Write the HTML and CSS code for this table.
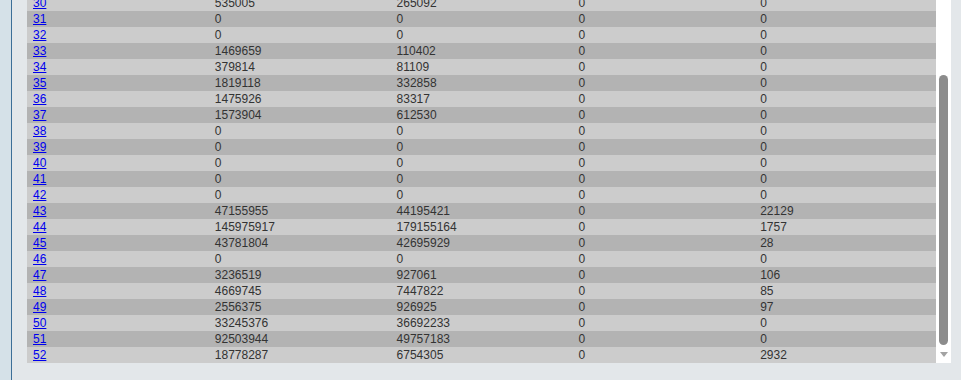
FILE: index.html
```html
<!DOCTYPE html>
<html>
<head>
<meta charset="utf-8">
<link rel="stylesheet" href="styles.css">
</head>
<body>
<div class="side"></div>
<div class="main">
  <div class="table-wrap">
    <table class="data">
      <tbody>
        <tr class="even"><td><a href="#">30</a></td><td>535005</td><td>265092</td><td>0</td><td>0</td></tr>
        <tr class="odd"><td><a href="#">31</a></td><td>0</td><td>0</td><td>0</td><td>0</td></tr>
        <tr class="even"><td><a href="#">32</a></td><td>0</td><td>0</td><td>0</td><td>0</td></tr>
        <tr class="odd"><td><a href="#">33</a></td><td>1469659</td><td>110402</td><td>0</td><td>0</td></tr>
        <tr class="even"><td><a href="#">34</a></td><td>379814</td><td>81109</td><td>0</td><td>0</td></tr>
        <tr class="odd"><td><a href="#">35</a></td><td>1819118</td><td>332858</td><td>0</td><td>0</td></tr>
        <tr class="even"><td><a href="#">36</a></td><td>1475926</td><td>83317</td><td>0</td><td>0</td></tr>
        <tr class="odd"><td><a href="#">37</a></td><td>1573904</td><td>612530</td><td>0</td><td>0</td></tr>
        <tr class="even"><td><a href="#">38</a></td><td>0</td><td>0</td><td>0</td><td>0</td></tr>
        <tr class="odd"><td><a href="#">39</a></td><td>0</td><td>0</td><td>0</td><td>0</td></tr>
        <tr class="even"><td><a href="#">40</a></td><td>0</td><td>0</td><td>0</td><td>0</td></tr>
        <tr class="odd"><td><a href="#">41</a></td><td>0</td><td>0</td><td>0</td><td>0</td></tr>
        <tr class="even"><td><a href="#">42</a></td><td>0</td><td>0</td><td>0</td><td>0</td></tr>
        <tr class="odd"><td><a href="#">43</a></td><td>47155955</td><td>44195421</td><td>0</td><td>22129</td></tr>
        <tr class="even"><td><a href="#">44</a></td><td>145975917</td><td>179155164</td><td>0</td><td>1757</td></tr>
        <tr class="odd"><td><a href="#">45</a></td><td>43781804</td><td>42695929</td><td>0</td><td>28</td></tr>
        <tr class="even"><td><a href="#">46</a></td><td>0</td><td>0</td><td>0</td><td>0</td></tr>
        <tr class="odd"><td><a href="#">47</a></td><td>3236519</td><td>927061</td><td>0</td><td>106</td></tr>
        <tr class="even"><td><a href="#">48</a></td><td>4669745</td><td>7447822</td><td>0</td><td>85</td></tr>
        <tr class="odd"><td><a href="#">49</a></td><td>2556375</td><td>926925</td><td>0</td><td>97</td></tr>
        <tr class="even"><td><a href="#">50</a></td><td>33245376</td><td>36692233</td><td>0</td><td>0</td></tr>
        <tr class="odd"><td><a href="#">51</a></td><td>92503944</td><td>49757183</td><td>0</td><td>0</td></tr>
        <tr class="even"><td><a href="#">52</a></td><td>18778287</td><td>6754305</td><td>0</td><td>2932</td></tr>
      </tbody>
    </table>
  </div>
  <div class="scrollbar">
    <div class="thumb"></div>
    <div class="arrow"></div>
  </div>
</div>
</body>
</html>
```

FILE: styles.css
```css
html, body {
  margin: 0;
  padding: 0;
  height: 100%;
}
body {
  display: flex;
  background: #e3e7ea;
  font-family: "Liberation Sans", Arial, sans-serif;
  font-size: 12px;
  color: #333333;
  overflow: hidden;
}
.side {
  width: 11px;
  flex: none;
  height: 380px;
  background: #d5e1e8;
  border-right: 1px solid #3d6f98;
}
.main {
  display: flex;
  align-items: flex-start;
  padding-left: 15px;
}
.table-wrap {
  width: 909px;
  height: 363px;
  overflow: hidden;
}
.data {
  width: 909px;
  margin-top: -5px;
  border-collapse: collapse;
  table-layout: fixed;
}
.data td {
  height: 16px;
  line-height: 16px;
  padding: 0 0 0 6px;
  white-space: nowrap;
}
.data tr.even td {
  background: #cccccc;
}
.data tr.odd td {
  background: #b3b3b3;
}
.data a {
  color: #0000ee;
  text-decoration: underline;
}
.scrollbar {
  width: 15px;
  height: 363px;
  background: #ffffff;
  display: flex;
  flex-direction: column;
  align-items: center;
}
.thumb {
  width: 9px;
  height: 270px;
  margin-top: 75px;
  background: #8c8c8c;
  border-radius: 5px;
}
.arrow {
  margin-top: 7px;
  width: 0;
  height: 0;
  border-left: 4px solid transparent;
  border-right: 4px solid transparent;
  border-top: 5px solid #a3a3a3;
}
```
